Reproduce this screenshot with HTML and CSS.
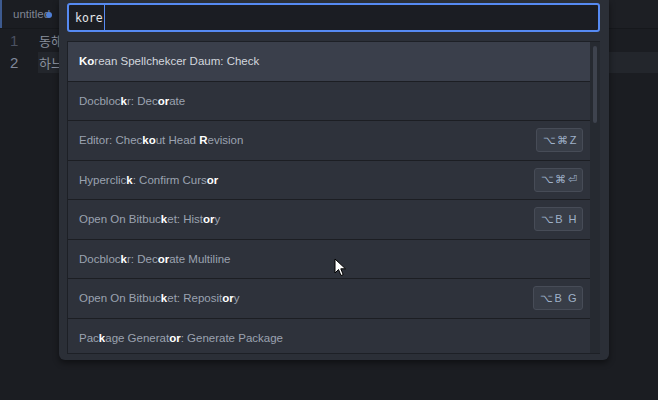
FILE: index.html
```html
<!DOCTYPE html>
<html>
<head>
<meta charset="utf-8">
<link rel="stylesheet" href="styles.css">
</head>
<body>
<div class="editor">
  <div class="tabbar">
    <div class="tab"><span class="tab-title">untitled</span><span class="dot"></span></div>
  </div>
  <div class="lines">
    <div class="line"><span class="num">1</span><span class="code">동해물과</span></div>
    <div class="line active"><span class="num">2</span><span class="code">하느님이</span></div>
  </div>
</div>

<div class="palette">
  <div class="input"><span class="query">kore</span><span class="caret"></span></div>
  <div class="list">
    <div class="items">
      <div class="row selected"><span class="label"><b>Ko</b>rean Spellchekcer Daum: Check</span></div>
      <div class="row"><span class="label">Docbloc<b>k</b>r: Dec<b>or</b>ate</span></div>
      <div class="row"><span class="label">Editor: Chec<b>ko</b>ut Head <b>R</b>evision</span><span class="key">⌥⌘Z</span></div>
      <div class="row"><span class="label">Hyperclic<b>k</b>: Confirm Curs<b>or</b></span><span class="key">⌥⌘⏎</span></div>
      <div class="row"><span class="label">Open On Bitbuc<b>k</b>et: Hist<b>or</b>y</span><span class="key">⌥B H</span></div>
      <div class="row"><span class="label">Docbloc<b>k</b>r: Dec<b>or</b>ate Multiline</span></div>
      <div class="row"><span class="label">Open On Bitbuc<b>k</b>et: Reposit<b>or</b>y</span><span class="key">⌥B G</span></div>
      <div class="row"><span class="label">Pac<b>k</b>age Generat<b>or</b>: Generate Package</span></div>
    </div>
    <div class="scrollbar"><div class="thumb"></div></div>
  </div>
</div>

<svg class="pointer" width="14" height="20" viewBox="0 0 14 20">
  <path d="M1 1 L1 15 L4.5 11.5 L7 17.5 L9.2 16.6 L6.8 10.8 L11.5 10.8 Z" fill="#fff" stroke="#000" stroke-width="1"/>
</svg>
</body>
</html>
```
FILE: styles.css
```css
html, body {
  margin: 0;
  padding: 0;
}
body {
  width: 658px;
  height: 400px;
  overflow: hidden;
  position: relative;
  background: #1b1d22;
  font-family: "Liberation Sans", Arial, sans-serif;
}
.editor {
  display: flex;
  flex-direction: column;
}
.tabbar {
  height: 28px;
  background: #1d1f24;
  border-bottom: 1px solid #16181c;
  display: flex;
}
.tab {
  display: flex;
  align-items: center;
  padding-left: 11px;
  width: 60px;
  border-left: 2px solid #3d5a8f;
  box-sizing: border-box;
  height: 28px;
  background: #1b1d22;
}
.tab-title {
  font-size: 11.5px;
  color: #7f8593;
}
.dot {
  width: 6px;
  height: 6px;
  border-radius: 50%;
  background: #4f7fd6;
  margin-left: -4px;
  margin-top: 1px;
}
.lines {
  padding-top: 1px;
}
.line {
  height: 21.5px;
  display: flex;
  align-items: center;
}
.line.active {
  background: linear-gradient(to right, #1b1d22 38px, #23262c 38px);
}
.num {
  width: 27px;
  padding-left: 10px;
  box-sizing: border-box;
  font-size: 15px;
  color: #4b5161;
}
.active .num {
  color: #80889a;
}
.code {
  font-family: "Noto Sans CJK KR", sans-serif;
  font-size: 13px;
  color: #8a909d;
  padding-left: 12px;
}

.palette {
  position: absolute;
  left: 59px;
  top: 0;
  width: 550px;
  height: 360px;
  box-sizing: border-box;
  padding: 3px 9px 0 8px;
  background: #2b2f37;
  border-radius: 0 0 6px 6px;
  box-shadow: 0 3px 6px rgba(0, 0, 0, 0.45);
  display: flex;
  flex-direction: column;
}
.input {
  height: 29px;
  box-sizing: border-box;
  border: 2px solid #568af2;
  border-radius: 3px;
  background: #1b1d23;
  display: flex;
  align-items: center;
  padding-left: 6px;
}
.query {
  font-family: "DejaVu Sans Mono", monospace;
  font-size: 11.5px;
  color: #e2e5ea;
}
.caret {
  width: 1px;
  height: 25px;
  background: #568af2;
  margin-left: 1px;
}
.list {
  margin-top: 9px;
  height: 313px;
  box-sizing: border-box;
  border: 1px solid #1d2026;
  border-right: none;
  display: flex;
  overflow: hidden;
}
.items {
  flex: 1;
  overflow: hidden;
  background: #2e323b;
}
.row {
  height: 38.5px;
  border-bottom: 1px solid #1c1e23;
  display: flex;
  align-items: center;
  justify-content: space-between;
  padding: 0 7px 0 11px;
  font-size: 11.5px;
  color: #9ba2b0;
}
.row.selected {
  background: #3a3f4b;
  color: #d3d7de;
}
.row b {
  color: #ffffff;
  font-weight: bold;
}
.key {
  height: 24px;
  box-sizing: border-box;
  border: 1px solid #474c57;
  border-radius: 3px;
  background: #383d47;
  display: flex;
  align-items: center;
  padding: 0 4px 0 6px;
  font-size: 11px;
  letter-spacing: 1.5px;
  color: #9fb1c9;
  white-space: pre;
}
.scrollbar {
  width: 10px;
  background: #262a31;
  position: relative;
}
.thumb {
  position: absolute;
  left: 3px;
  top: 4px;
  width: 4px;
  height: 77px;
  border-radius: 2px;
  background: #3e434e;
}
.pointer {
  position: absolute;
  left: 334px;
  top: 258px;
}
```
